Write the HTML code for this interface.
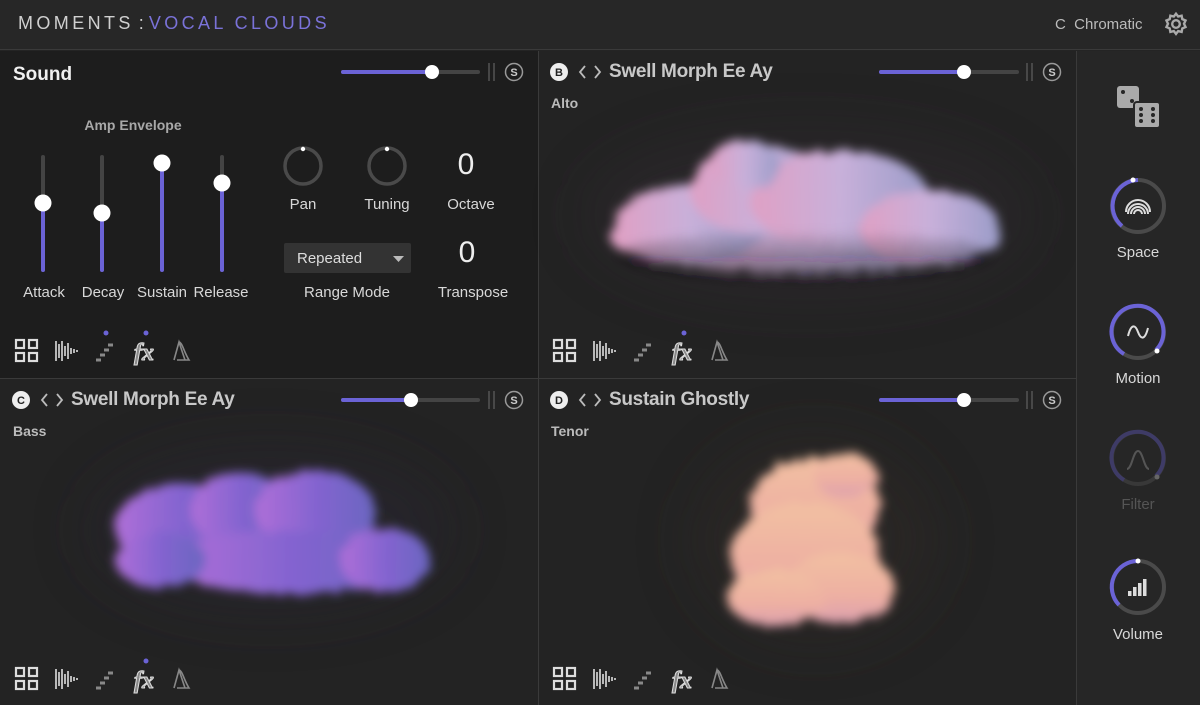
<!DOCTYPE html>
<html><head><meta charset="utf-8">
<style>
*{margin:0;padding:0;box-sizing:border-box}
body{width:1200px;height:705px;background:#242424;font-family:"Liberation Sans",sans-serif;color:#ddd;position:relative;overflow:hidden}
.a{position:absolute}
.t{position:absolute;white-space:nowrap}
.c{transform:translateX(-50%)}
.lbl{font-size:15px;color:#d8d8d8}
.h{font-weight:bold;font-size:19px;color:#c8c8c8;letter-spacing:-0.3px}
</style></head><body>
<div class="a" style="left:0;top:0;width:1200px;height:50px;background:#272727;border-bottom:1px solid #3a3a3a"></div>
<div class="t" style="left:18px;top:13px;font-size:18px;letter-spacing:3.4px;color:#d0d0d0">MOMENTS<span style="letter-spacing:0">&nbsp;:&nbsp;</span><span style="color:#7a72d8">VOCAL CLOUDS</span></div>
<div class="t" style="left:1055px;top:16px;font-size:15px;color:#bbb">C&nbsp; Chromatic</div>
<svg class="a" style="left:1163px;top:11px" width="26" height="26" viewBox="0 0 24 24"><g fill="none" stroke="#aaa" stroke-width="2.2"><circle cx="12" cy="12" r="3.5"/><path d="M12 2.5l2 2.6 3.2-.8.6 3.2 3 1.3-1.4 3 1.4 3-3 1.3-.6 3.2-3.2-.8-2 2.6-2-2.6-3.2.8-.6-3.2-3-1.3 1.4-3-1.4-3 3-1.3.6-3.2 3.2.8z"/></g></svg>

<div class="a" style="left:0;top:51px;width:538px;height:327px;background:#1d1d1d"></div>
<div class="a" style="left:539px;top:51px;width:537px;height:327px;background:#232323"></div>
<div class="a" style="left:0;top:379px;width:538px;height:326px;background:#232323"></div>
<div class="a" style="left:539px;top:379px;width:537px;height:326px;background:#232323"></div>
<div class="a" style="left:538px;top:51px;width:1px;height:654px;background:#3a3a3a"></div>
<div class="a" style="left:1076px;top:51px;width:1px;height:654px;background:#3a3a3a"></div>
<div class="a" style="left:0;top:378px;width:1076px;height:1px;background:#3a3a3a"></div>
<div class="a" style="left:1077px;top:51px;width:123px;height:654px;background:#262626"></div>

<svg class="a" style="left:0;top:0" width="1076" height="705">
<defs>
<filter id="f" x="-50%" y="-50%" width="200%" height="200%"><feTurbulence type="fractalNoise" baseFrequency="0.12" numOctaves="3" result="n"/><feDisplacementMap in="SourceGraphic" in2="n" scale="10"/><feGaussianBlur stdDeviation="5"/></filter>
<filter id="g" x="-100%" y="-100%" width="300%" height="300%"><feGaussianBlur stdDeviation="30"/></filter>
<linearGradient id="cb" x1="0" x2="1"><stop offset="0" stop-color="#e0a0c4"/><stop offset=".5" stop-color="#c8b0da"/><stop offset="1" stop-color="#9a9cc8"/></linearGradient>
<linearGradient id="cc" x1="0" x2="1"><stop offset="0" stop-color="#b06fd8"/><stop offset=".5" stop-color="#8464d0"/><stop offset="1" stop-color="#6a66c0"/></linearGradient>
<linearGradient id="cd" x1="0" x2="0" y1="0" y2="1"><stop offset="0" stop-color="#f2c0a2"/><stop offset=".6" stop-color="#eeb0a2"/><stop offset="1" stop-color="#dca0ae"/></linearGradient>
<linearGradient id="sh" x1="0" x2="0" y1="0" y2="1"><stop offset="0" stop-color="#000" stop-opacity="0"/><stop offset="1" stop-color="#201a24" stop-opacity=".55"/></linearGradient>
</defs>
<ellipse cx="808" cy="215" rx="220" ry="80" fill="#332c30" filter="url(#g)" opacity=".45"/>
<g filter="url(#f)" fill="url(#cb)">
<ellipse cx="805" cy="238" rx="195" ry="36"/><ellipse cx="690" cy="225" rx="75" ry="40"/><ellipse cx="760" cy="190" rx="70" ry="45"/><ellipse cx="840" cy="200" rx="90" ry="50"/><ellipse cx="930" cy="228" rx="70" ry="38"/><ellipse cx="745" cy="165" rx="35" ry="25"/>
</g>
<ellipse cx="805" cy="255" rx="190" ry="25" fill="url(#sh)" filter="url(#f)"/>
<ellipse cx="270" cy="530" rx="180" ry="80" fill="#2c2634" filter="url(#g)" opacity=".45"/>
<g filter="url(#f)" fill="url(#cc)">
<ellipse cx="180" cy="528" rx="65" ry="45"/><ellipse cx="240" cy="510" rx="50" ry="38"/><ellipse cx="315" cy="512" rx="60" ry="42"/><ellipse cx="290" cy="562" rx="120" ry="32"/><ellipse cx="385" cy="560" rx="45" ry="32"/><ellipse cx="160" cy="560" rx="45" ry="28"/>
</g>
<ellipse cx="815" cy="540" rx="120" ry="100" fill="#332c28" filter="url(#g)" opacity=".45"/>
<g filter="url(#f)" fill="url(#cd)">
<ellipse cx="815" cy="505" rx="65" ry="48"/><ellipse cx="805" cy="555" rx="75" ry="52"/><ellipse cx="840" cy="588" rx="55" ry="35"/><ellipse cx="775" cy="598" rx="48" ry="28"/><ellipse cx="845" cy="475" rx="32" ry="22"/>
</g>
</svg>

<div class="t" style="left:13px;top:64px;font-size:19px;font-weight:bold;color:#f0f0f0">Sound</div>
<div class="t c" style="left:133px;top:117px;font-size:14px;font-weight:bold;color:#a8a8a8">Amp Envelope</div>

<svg class="a" style="left:0;top:0" width="1200" height="705">
<g stroke-linecap="round">
<line x1="343" y1="72" x2="478" y2="72" stroke="#444" stroke-width="4"/><line x1="343" y1="72" x2="432" y2="72" stroke="#6b63d6" stroke-width="4"/><circle cx="432" cy="72" r="7" fill="#fff"/>
<line x1="881" y1="72" x2="1017" y2="72" stroke="#444" stroke-width="4"/><line x1="881" y1="72" x2="964" y2="72" stroke="#6b63d6" stroke-width="4"/><circle cx="964" cy="72" r="7" fill="#fff"/>
<line x1="343" y1="400" x2="478" y2="400" stroke="#444" stroke-width="4"/><line x1="343" y1="400" x2="411" y2="400" stroke="#6b63d6" stroke-width="4"/><circle cx="411" cy="400" r="7" fill="#fff"/>
<line x1="881" y1="400" x2="1017" y2="400" stroke="#444" stroke-width="4"/><line x1="881" y1="400" x2="964" y2="400" stroke="#6b63d6" stroke-width="4"/><circle cx="964" cy="400" r="7" fill="#fff"/>
</g>
<g stroke="#555" stroke-width="1.5">
<path d="M489 63v18M494 63v18M1027 63v18M1032 63v18M489 391v18M494 391v18M1027 391v18M1032 391v18"/>
</g>
<g fill="none" stroke="#999" stroke-width="1.5"><circle cx="514" cy="72" r="8.5"/><circle cx="1052" cy="72" r="8.5"/><circle cx="514" cy="400" r="8.5"/><circle cx="1052" cy="400" r="8.5"/></g>
<g font-family="Liberation Sans" font-weight="bold" font-size="11" fill="#ccc" text-anchor="middle"><text x="514" y="76">S</text><text x="1052" y="76">S</text><text x="514" y="404">S</text><text x="1052" y="404">S</text></g>
<g fill="#eee"><circle cx="559" cy="72" r="9"/><circle cx="21" cy="400" r="9"/><circle cx="559" cy="400" r="9"/></g>
<g font-family="Liberation Sans" font-weight="bold" font-size="11" fill="#222" text-anchor="middle"><text x="559" y="76">B</text><text x="21" y="404">C</text><text x="559" y="404">D</text></g>
<g fill="none" stroke="#bbb" stroke-width="1.8"><path d="M585 66l-5 6 5 6M595 66l5 6-5 6M47 394l-5 6 5 6M57 394l5 6-5 6M585 394l-5 6 5 6M595 394l5 6-5 6"/></g>
<g stroke-linecap="round" stroke-width="4">
<line x1="43" y1="157" x2="43" y2="270" stroke="#444"/><line x1="43" y1="203" x2="43" y2="270" stroke="#6b63d6"/>
<line x1="102" y1="157" x2="102" y2="270" stroke="#444"/><line x1="102" y1="213" x2="102" y2="270" stroke="#6b63d6"/>
<line x1="162" y1="163" x2="162" y2="270" stroke="#6b63d6"/>
<line x1="222" y1="157" x2="222" y2="270" stroke="#444"/><line x1="222" y1="183" x2="222" y2="270" stroke="#6b63d6"/>
</g>
<g fill="#fff"><circle cx="43" cy="203" r="8.5"/><circle cx="102" cy="213" r="8.5"/><circle cx="162" cy="163" r="8.5"/><circle cx="222" cy="183" r="8.5"/></g>
<g fill="none" stroke="#4a4a4a" stroke-width="3.5"><circle cx="303" cy="166" r="18"/><circle cx="387" cy="166" r="18"/></g>
<g fill="#fff"><circle cx="303" cy="149" r="2.2"/><circle cx="387" cy="149" r="2.2"/></g>
<rect x="284" y="243" width="127" height="30" rx="2" fill="#333"/>
<path d="M393 256h11l-5.5 6z" fill="#bbb"/>
<g fill="none" stroke-width="4">
<circle cx="1138" cy="206" r="26" stroke="#4a4a4a"/><path d="M1138 180 A26 26 0 0 0 1122 226" stroke="#6b63d6"/>
<circle cx="1138" cy="332" r="26" stroke="#4a4a4a"/><path d="M1124 354 A26 26 0 1 1 1156 350" stroke="#6b63d6"/>
<circle cx="1138" cy="458" r="26" stroke="#383838"/><path d="M1124 480 A26 26 0 1 1 1156 476" stroke="#3e3b66"/>
<circle cx="1138" cy="587" r="26" stroke="#4a4a4a"/><path d="M1138 561 A26 26 0 0 0 1119 605" stroke="#6b63d6"/>
</g>
<g fill="#fff"><circle cx="1133" cy="180" r="2.5"/><circle cx="1157" cy="351" r="2.5"/><circle cx="1138" cy="561" r="2.5"/></g>
<circle cx="1157" cy="477" r="2.5" fill="#666"/>
<g fill="none" stroke="#ddd" stroke-width="2"><path d="M1128 214a10 10 0 0 1 20 0M1131 214a7 7 0 0 1 14 0M1134 214a4 4 0 0 1 8 0"/><path d="M1126 212a12 12 0 0 1 24 0"/><path d="M1128 336c3-12 7-12 10-4s7 8 10-4"/></g>
<path d="M1127 469c5 0 6-18 11-18s6 18 11 18" fill="none" stroke="#555" stroke-width="2"/>
<g fill="#ddd"><rect x="1128" y="591" width="3.5" height="5"/><rect x="1133" y="587" width="3.5" height="9"/><rect x="1138" y="583" width="3.5" height="13"/><rect x="1143" y="579" width="3.5" height="17"/></g>
<rect x="1117" y="86" width="22" height="22" rx="3" fill="#aaa"/><rect x="1134" y="102" width="26" height="26" rx="3" fill="#aaa" stroke="#262626" stroke-width="2"/>
<g fill="#262626"><circle cx="1123" cy="92" r="2"/><circle cx="1132" cy="101" r="2"/><circle cx="1141" cy="109" r="2"/><circle cx="1153" cy="109" r="2"/><circle cx="1141" cy="115" r="2"/><circle cx="1153" cy="115" r="2"/><circle cx="1141" cy="121" r="2"/><circle cx="1153" cy="121" r="2"/></g>
</svg>

<div class="t c" style="left:466px;top:148px;font-size:30px;color:#eee">0</div>
<div class="t c" style="left:467px;top:236px;font-size:30px;color:#eee">0</div>
<div class="t lbl c" style="left:303px;top:196px">Pan</div>
<div class="t lbl c" style="left:387px;top:196px">Tuning</div>
<div class="t lbl c" style="left:471px;top:196px">Octave</div>
<div class="t lbl c" style="left:44px;top:284px">Attack</div>
<div class="t lbl c" style="left:103px;top:284px">Decay</div>
<div class="t lbl c" style="left:162px;top:284px">Sustain</div>
<div class="t lbl c" style="left:221px;top:284px">Release</div>
<div class="t lbl c" style="left:347px;top:284px">Range Mode</div>
<div class="t lbl c" style="left:473px;top:284px">Transpose</div>
<div class="t" style="left:297px;top:250px;font-size:15px;color:#ddd">Repeated</div>

<div class="t h" style="left:609px;top:61px">Swell Morph Ee Ay</div>
<div class="t h" style="left:71px;top:389px">Swell Morph Ee Ay</div>
<div class="t h" style="left:609px;top:389px">Sustain Ghostly</div>
<div class="t" style="left:551px;top:95px;font-size:14px;font-weight:bold;color:#bbb">Alto</div>
<div class="t" style="left:13px;top:423px;font-size:14px;font-weight:bold;color:#bbb">Bass</div>
<div class="t" style="left:551px;top:423px;font-size:14px;font-weight:bold;color:#bbb">Tenor</div>

<div class="t lbl c" style="left:1138px;top:244px">Space</div>
<div class="t lbl c" style="left:1138px;top:370px">Motion</div>
<div class="t lbl c" style="left:1138px;top:496px;color:#555">Filter</div>
<div class="t lbl c" style="left:1138px;top:626px">Volume</div>

<svg class="a" style="left:0;top:0" width="1076" height="705">
<defs>
<g id="row">
<g fill="none" stroke-width="2.2"><rect x="-11" y="-10" width="8" height="8"/><rect x="2" y="-10" width="8" height="8"/><rect x="-11" y="3" width="8" height="8"/><rect x="2" y="3" width="8" height="8"/></g>
<path d="M29-9v20M32-6v14M35-9v20M38-4v10M41-7v16M44-2v6M47-1v4M50 0v2" stroke-width="1.6" fill="none"/>
<path d="M69 10h5M73 5h5M77 0h5M81-5h5" stroke="#888" stroke-width="3" fill="none"/>
<text x="107" y="10" font-family="Liberation Serif" font-style="italic" font-weight="bold" font-size="24" fill="#888">fx</text>
<path d="M147 10l5-18 6 18M152-8c3 0 5 10 10 18h-12" stroke="#888" stroke-width="1.6" fill="none"/>
</g>
</defs>
<use href="#row" x="27" y="350" style="stroke:#ddd"/>
<use href="#row" x="565" y="350" style="stroke:#ddd"/>
<use href="#row" x="27" y="678" style="stroke:#ddd"/>
<use href="#row" x="565" y="678" style="stroke:#ddd"/>
<g fill="#6b63d6"><circle cx="106" cy="333" r="2.5"/><circle cx="146" cy="333" r="2.5"/><circle cx="684" cy="333" r="2.5"/><circle cx="146" cy="661" r="2.5"/></g>
</svg>
</body></html>
